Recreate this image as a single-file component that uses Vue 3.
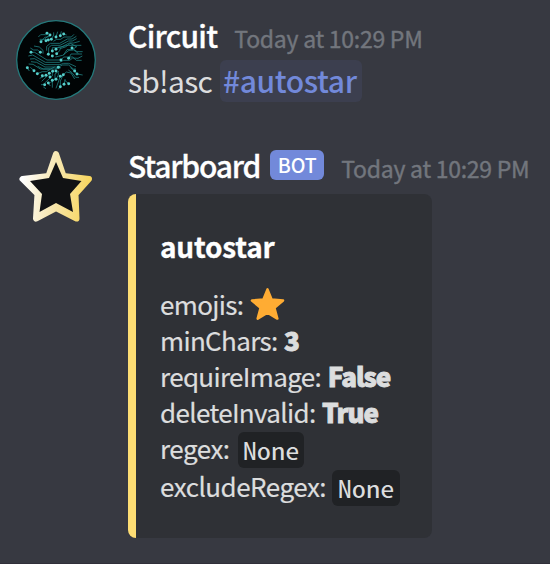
<script setup>
const rows = [
  { label: 'emojis:', kind: 'emoji' },
  { label: 'minChars:', kind: 'bold', value: '3' },
  { label: 'requireImage:', kind: 'bold', value: 'False' },
  { label: 'deleteInvalid:', kind: 'bold', value: 'True' },
  { label: 'regex:', kind: 'code', value: 'None' },
  { label: 'excludeRegex:', kind: 'code wide', value: 'None' },
]

const dots = [
  [141, 100], [150, 105], [123, 125], [138, 122], [145, 120], [154, 118], [93, 157], [121, 157],
  [168, 111], [181, 107], [191, 102], [157, 153], [145, 163], [157, 168], [168, 148], [170, 161],
  [216, 144], [206, 175], [183, 180], [82, 203], [102, 212], [112, 221], [127, 227], [175, 202],
  [138, 226], [148, 220], [158, 214], [168, 213], [150, 231], [168, 238], [134, 254], [145, 249],
  [157, 241], [181, 260], [192, 253], [206, 251], [190, 224], [224, 213], [231, 222], [181, 229],
]
</script>

<template>
  <main class="chat">
    <article class="message first">
      <svg class="avatar" viewBox="48 60 240 240" aria-hidden="true">
        <circle cx="168" cy="180" r="118" fill="#010405" stroke="#24797b" stroke-width="4" />
        <g fill="none" stroke="#1f8283" stroke-width="2.4">
          <path d="M115 111 122 104H137L141 100M119 118H133L145 108H150M123 125 134 112 147 110M154 118 161 105V97M168 111 173 95M181 107 184 94M191 102 200 105M160 124 170 118H182L192 111H214L222 103" />
          <path d="M140 152V139L151 130H179L202 117H216L229 109M146 163V143L154 136H180L205 123H217L230 116M157 153V143H181L207 129H221L239 124M168 148 174 142 205 136H244M170 161 180 151V146L196 141 211 130 231 141M190 166 201 149H218L229 140M166 171 188 166 207 151 221 150 235 160" />
          <path d="M91 144 101 150H113L121 157M102 138 118 141 129 151V161M93 157 104 157 141 180H183L191 171H218L229 181H245M85 168 98 165 136 187H178L191 181H209L218 174 234 175 247 168M90 177 104 176 135 194H180L191 190 206 190 228 200M93 185 110 187 135 201H175L188 195H206L220 207 228 207M86 192 99 193 121 207H164L183 203M206 175 213 162H246M216 144 231 155H248" />
          <path d="M82 203 88 213M91 202 102 212M113 199 130 207H151L164 201M112 221 127 215H139L151 208M119 235 138 226M125 244 150 220M134 254 123 254M134 249 157 228V217M145 249 151 258M151 248 165 238V222L177 213M157 241V263M168 238 175 225V217M168 265 181 229M181 260V243L190 224M192 253 196 238M206 251 192 239M190 224 199 216 213 219 224 237M205 210 216 218 227 232H237M211 203 224 213 231 222 248 225M138 266 130 261M175 268 181 260" />
        </g>
        <circle v-for="(d, i) in dots" :key="i" :cx="d[0]" :cy="d[1]" r="4.4" fill="#55ceca" />
      </svg>
      <div class="body">
        <header class="head"><span class="name circuit">Circuit</span><time class="time">Today at 10:29 PM</time></header>
        <p class="text"><span class="command">sb!asc</span><span class="mention">#autostar</span></p>
      </div>
    </article>

    <article class="message second">
      <svg class="avatar" viewBox="0 0 80 80" aria-hidden="true">
        <defs>
          <linearGradient id="gold" gradientUnits="userSpaceOnUse" x1="6" y1="34" x2="74" y2="42">
            <stop offset="0" stop-color="#ffffff" />
            <stop offset="0.45" stop-color="#f7e8b4" />
            <stop offset="1" stop-color="#f8d65d" />
          </linearGradient>
        </defs>
        <path d="M40 7 47.5 29 73 32 59.5 47 60.5 71.5 40 61 20 71.5 21.5 47 6.5 32 32.5 29Z" fill="url(#gold)" stroke="url(#gold)" stroke-width="6" stroke-linejoin="round" />
        <path d="M40 15 47 31 65.5 34 54 47 57 65 40 56 23.5 65 26 47 14 34 33 31Z" fill="#111214" />
      </svg>
      <div class="body">
        <header class="head"><span class="name starboard">Starboard</span><span class="bot">BOT</span><time class="time">Today at 10:29 PM</time></header>
        <section class="embed">
          <h2 class="title">autostar</h2>
          <div v-for="r in rows" :key="r.label" class="row" :class="r.kind">
            <span class="label">{{ r.label }}</span>
            <svg v-if="r.kind === 'emoji'" class="star" viewBox="0 0 36 34" aria-hidden="true">
              <path d="M18 2 22.3 12.5 34 13.4 25.1 20.9 28.1 32 18 26 7.9 32 10.9 20.9 2 13.4 13.7 12.5Z" fill="#ffac33" stroke="#ffac33" stroke-width="2.6" stroke-linejoin="round" />
            </svg>
            <strong v-else-if="r.kind === 'bold'" class="strong">{{ r.value }}</strong>
            <code v-else class="value"><span class="mono">{{ r.value }}</span></code>
          </div>
        </section>
      </div>
    </article>
  </main>
</template>

<style>
body { margin: 0; background: #373941; }
</style>

<style scoped>
.chat {
  box-sizing: border-box;
  width: 550px;
  height: 564px;
  padding: 16px 0 0 16px;
  overflow: hidden;
  background: #373941;
  border-bottom: 1px solid #302f39;
  color: #dcddde;
  font-family: "Noto Sans CJK SC", "Noto Sans", sans-serif;
}
.message { display: flex; gap: 32px; align-items: flex-start; white-space: nowrap; }
.first { height: 130px; }
.avatar { width: 80px; height: 80px; flex: none; margin-top: 4px; }
.second .avatar { margin-top: 1px; }
.body { flex: none; }
.head { display: flex; align-items: baseline; height: 38px; line-height: 38px; }
.name { color: #fff; font-size: 30px; font-weight: 500; -webkit-text-stroke: 0.3px #fff; }
.circuit { letter-spacing: -0.75px; }
.starboard { letter-spacing: -1.2px; }
.time {
  margin-left: 17px;
  color: #72767d;
  font-size: 23px;
  letter-spacing: -0.26px;
  -webkit-text-stroke: 0.4px #72767d;
}
.text { display: flex; align-items: center; margin: 6px 0 0; height: 42px; font-size: 30px; line-height: 38px; }
.command { margin-top: -3px; letter-spacing: -0.75px; }
.mention {
  box-sizing: border-box;
  width: 142px;
  height: 42px;
  margin-left: 8px;
  padding: 1px 0 0 3px;
  border-radius: 6px;
  background: #3c3f4f;
  color: #7289da;
  font-weight: 500;
  letter-spacing: -0.4px;
}
.bot {
  align-self: flex-start;
  width: 54px;
  height: 30px;
  margin: 4px 0 0 10px;
  border-radius: 6px;
  background: #7289da;
  color: #fff;
  font-size: 19.5px;
  font-weight: 500;
  line-height: 30px;
  text-align: center;
}
.embed {
  box-sizing: border-box;
  width: 304px;
  height: 344px;
  margin-top: 10px;
  padding: 34px 0 0 24px;
  border-left: 8px solid #fddd74;
  border-radius: 8px;
  background: #2f3136;
}
.title {
  margin: 0 0 20px;
  color: #fff;
  font-size: 28px;
  font-weight: 700;
  line-height: 36px;
  letter-spacing: -0.2px;
  -webkit-text-stroke: 0.3px #fff;
}
.row { display: flex; align-items: flex-start; height: 36px; font-size: 26px; line-height: 36px; }
.label { padding-top: 1.5px; letter-spacing: -0.66px; -webkit-text-stroke: 0.2px #dcddde; }
.star { width: 35px; height: 34px; margin: 3px 0 0 7px; }
.strong {
  padding-top: 1.5px;
  margin-left: 6.5px;
  font-weight: 900;
  letter-spacing: -1px;
  -webkit-text-stroke: 0.9px #dcddde;
}
.value {
  display: flex;
  justify-content: center;
  flex: none;
  width: 66px;
  height: 36px;
  margin: 4px 0 0 8px;
  border-radius: 6px;
  background: #202225;
  font-family: "Noto Sans Mono CJK SC", "DejaVu Sans Mono", monospace;
  font-size: 24px;
  line-height: 36px;
}
.mono { transform: scaleX(1.18); }
.code .label { letter-spacing: -0.5px; }
.wide { margin-top: 2px; }
.wide .value { width: 68px; margin-left: 6px; }
</style>
